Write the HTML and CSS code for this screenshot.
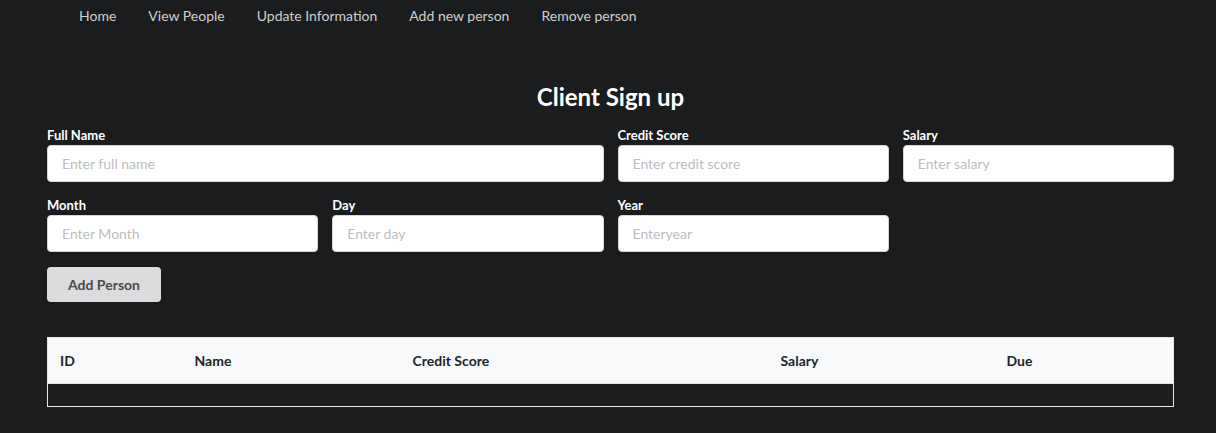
FILE: index.html
```html
<!DOCTYPE html>
<html>
<head>
<meta charset="utf-8">
<link rel="stylesheet" href="styles.css">
</head>
<body>
<nav class="nav">
  <a class="nav-link">Home</a>
  <a class="nav-link">View People</a>
  <a class="nav-link">Update Information</a>
  <a class="nav-link">Add new person</a>
  <a class="nav-link">Remove person</a>
</nav>
<main class="container">
  <h1 class="title">Client Sign up</h1>
  <form class="form">
    <div class="field span2">
      <label class="label">Full Name</label>
      <input class="input" placeholder="Enter full name">
    </div>
    <div class="field">
      <label class="label">Credit Score</label>
      <input class="input" placeholder="Enter credit score">
    </div>
    <div class="field">
      <label class="label">Salary</label>
      <input class="input" placeholder="Enter salary">
    </div>
    <div class="field">
      <label class="label">Month</label>
      <input class="input" placeholder="Enter Month">
    </div>
    <div class="field">
      <label class="label">Day</label>
      <input class="input" placeholder="Enter day">
    </div>
    <div class="field">
      <label class="label">Year</label>
      <input class="input" placeholder="Enteryear">
    </div>
  </form>
  <button class="btn" type="button">Add Person</button>
  <table class="table">
    <thead>
      <tr>
        <th class="c-id">ID</th>
        <th class="c-name">Name</th>
        <th class="c-credit">Credit Score</th>
        <th class="c-salary">Salary</th>
        <th class="c-due">Due</th>
      </tr>
    </thead>
    <tbody>
      <tr class="empty"><td colspan="5"></td></tr>
    </tbody>
  </table>
</main>
</body>
</html>
```
FILE: styles.css
```css
* { box-sizing: border-box; }
html, body {
  margin: 0;
  background: #1b1c1e;
  font-family: Lato, "Noto Sans", sans-serif;
  color: #fff;
}
.nav {
  display: flex;
  padding: 7px 0 0 63px;
  height: 32px;
}
.nav-link {
  padding: 0 16px;
  font-size: 14px;
  line-height: 18px;
  color: #cfcfcf;
}
.container {
  padding: 0 42px 0 47px;
}
.title {
  margin: 50px 0 0;
  text-align: center;
  font-size: 24px;
  line-height: 30px;
  font-weight: 700;
}
.form {
  display: grid;
  grid-template-columns: repeat(4, 1fr);
  column-gap: 14px;
  row-gap: 15px;
  margin-top: 15px;
}
.span2 { grid-column: span 2; }
.field { display: flex; flex-direction: column; }
.label {
  font-size: 13px;
  font-weight: 700;
  line-height: 16px;
  margin-bottom: 2px;
}
.input {
  height: 37px;
  border: 1px solid #d6d6d6;
  border-radius: 4px;
  background: #fff;
  padding: 0 14px;
  font-family: Lato, "Noto Sans", sans-serif;
  font-size: 14px;
  color: #333;
}
.input::placeholder { color: #bdbdbd; }
.btn {
  display: block;
  margin-top: 15px;
  width: 114px;
  height: 35px;
  border: none;
  border-radius: 4px;
  background: #dcdcde;
  color: #4a4a4a;
  font-family: Lato, "Noto Sans", sans-serif;
  font-size: 14px;
  font-weight: 700;
}
.table {
  margin-top: 35px;
  width: 100%;
  border-collapse: collapse;
  border: 1px solid #e6e6e6;
}
.table th {
  background: #f8f9fa;
  color: #212529;
  font-size: 14px;
  font-weight: 700;
  text-align: left;
  height: 46px;
  padding: 0 12px;
  border-bottom: 1px solid #dee2e6;
}
.c-id { width: 135px; }
.c-name { width: 218px; }
.c-credit { width: 368px; }
.c-salary { width: 226px; }
.empty td { height: 23px; padding: 0; }
```
